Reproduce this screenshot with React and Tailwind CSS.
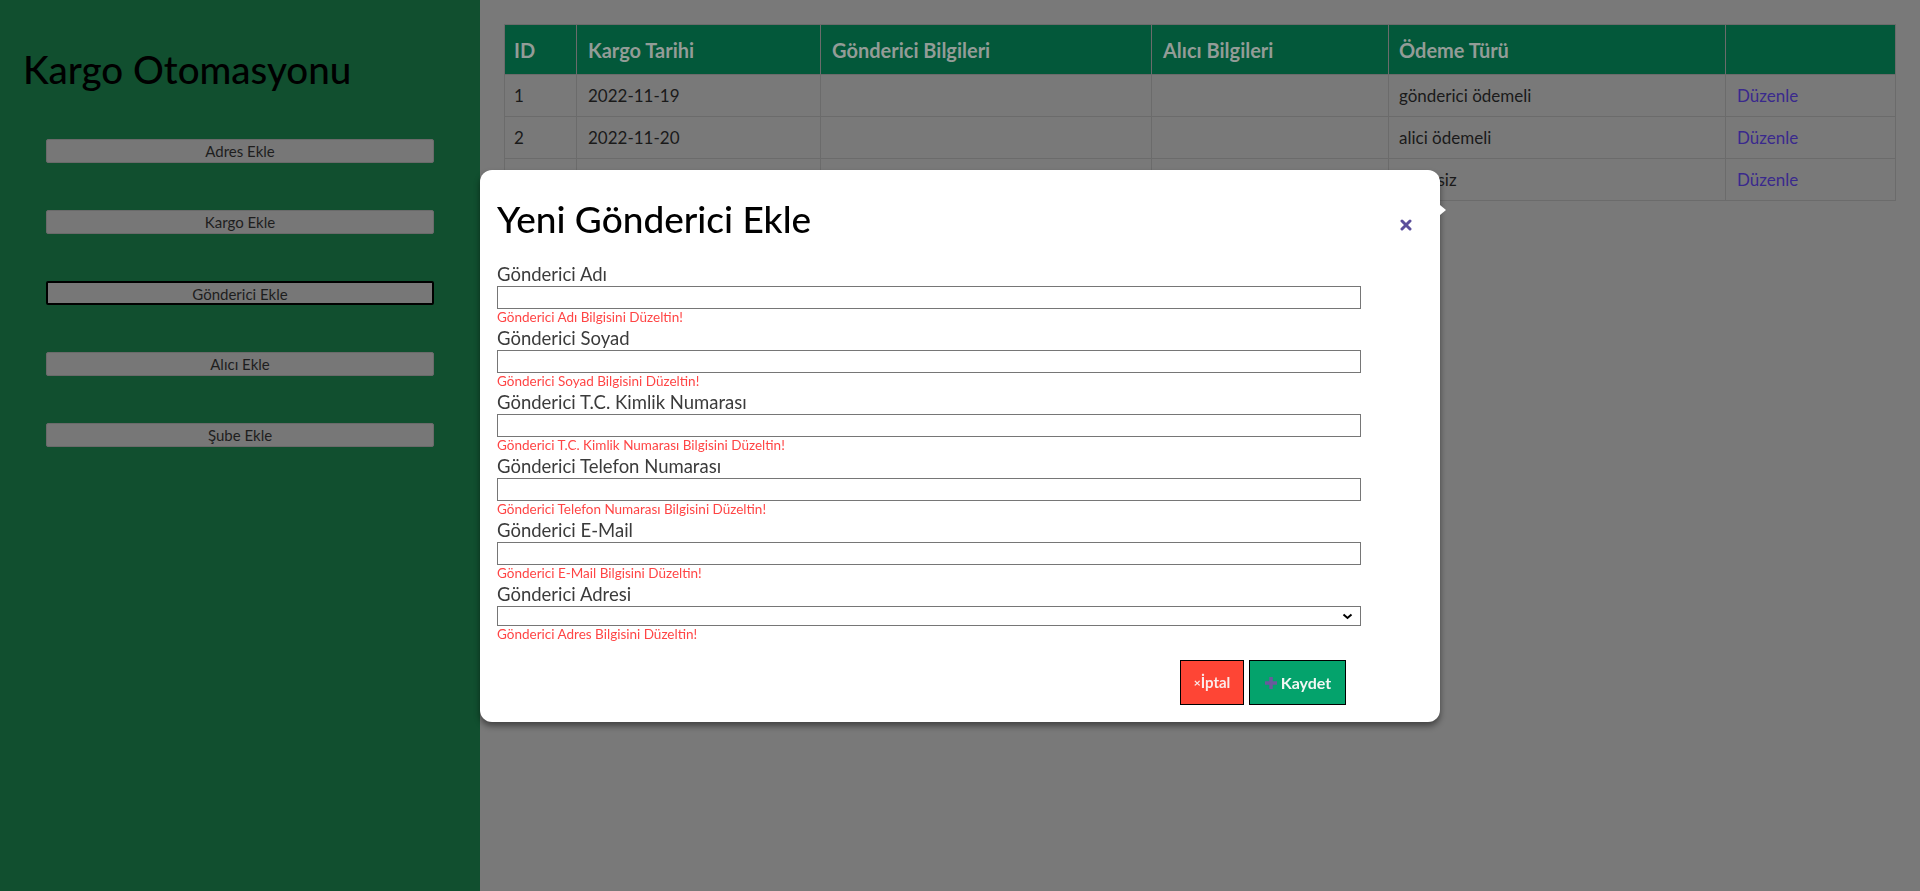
import React from 'react'

const rows = [
  { id: 1, date: '2022-11-19', odeme: 'gönderici ödemeli' },
  { id: 2, date: '2022-11-20', odeme: 'alici ödemeli' },
  { id: 3, date: '2022-11-21', odeme: 'ücretsiz' },
]

const fields = [
  { label: 'Gönderici Adı', error: 'Gönderici Adı Bilgisini Düzeltin!' },
  { label: 'Gönderici Soyad', error: 'Gönderici Soyad Bilgisini Düzeltin!' },
  { label: 'Gönderici T.C. Kimlik Numarası', error: 'Gönderici T.C. Kimlik Numarası Bilgisini Düzeltin!' },
  { label: 'Gönderici Telefon Numarası', error: 'Gönderici Telefon Numarası Bilgisini Düzeltin!' },
  { label: 'Gönderici E-Mail', error: 'Gönderici E-Mail Bilgisini Düzeltin!' },
]

const menu = ['Adres Ekle', 'Kargo Ekle', 'Gönderici Ekle', 'Alıcı Ekle', 'Şube Ekle']

const Sidebar = () => (
  <div className="w-[480px] shrink-0 min-h-screen bg-[#114f2f] pt-[47px]">
    <h1 className="pl-[23px] text-[38.5px] leading-[45px] font-medium text-black">Kargo Otomasyonu</h1>
    <div className="mt-[47px] flex flex-col gap-[47px]">
      {menu.map((m) => (
        <button
          key={m}
          className={`mx-auto w-[388px] h-[24px] rounded-[2px] bg-[#777777] text-[15px] text-[#1e1e1e] ${
            m === 'Gönderici Ekle' ? 'border-2 border-black' : 'border border-[#6a6a6a]'
          }`}
        >
          {m}
        </button>
      ))}
    </div>
  </div>
)

const KargoTable = () => (
  <div className="flex-1 p-[24px]">
    <table className="w-full border-collapse border border-[#6b6b6b] text-left">
      <thead>
        <tr className="h-[50px] bg-[#03583a] text-[20px] font-bold text-[#939c97]">
          <th className="w-[72px] px-[9px] font-bold border-x border-[#6b6b6b]">ID</th>
          <th className="w-[244px] px-[11px] font-bold border-x border-[#6b6b6b]">Kargo Tarihi</th>
          <th className="w-[331px] px-[11px] font-bold border-x border-[#6b6b6b]">Gönderici Bilgileri</th>
          <th className="w-[237px] px-[11px] font-bold border-x border-[#6b6b6b]">Alıcı Bilgileri</th>
          <th className="w-[337px] px-[10px] font-bold border-x border-[#6b6b6b]">Ödeme Türü</th>
          <th className="px-[11px] border-x border-[#6b6b6b]"></th>
        </tr>
      </thead>
      <tbody className="text-[17px] text-[#1a1a1a]">
        {rows.map((r) => (
          <tr key={r.id} className="h-[42px]">
            <td className="px-[9px] border border-[#6b6b6b]">{r.id}</td>
            <td className="px-[11px] border border-[#6b6b6b]">{r.date}</td>
            <td className="px-[11px] border border-[#6b6b6b]"></td>
            <td className="px-[11px] border border-[#6b6b6b]"></td>
            <td className="px-[10px] border border-[#6b6b6b]">{r.odeme}</td>
            <td className="px-[11px] border border-[#6b6b6b] text-[#39298d]">Düzenle</td>
          </tr>
        ))}
      </tbody>
    </table>
  </div>
)

const Modal = () => (
  <div className="fixed inset-0 flex justify-center pt-[170px]">
    <div className="relative w-[960px] h-[552px] rounded-[12px] bg-white pt-[26px] pl-[17px] shadow-[0_4px_6px_rgba(0,0,0,0.45)]">
      {/* little notch on the right edge */}
      <div className="absolute left-full top-[35px] border-y-[5px] border-y-transparent border-l-[6px] border-l-white" />

      <button className="absolute right-[28px] top-[49px] text-[#5b4f9b]">
        <svg width="12" height="12" viewBox="0 0 12 12">
          <path d="M2 2 L10 10 M10 2 L2 10" stroke="currentColor" strokeWidth="3" strokeLinecap="round" />
        </svg>
      </button>

      <h2 className="text-[37px] leading-[45px] font-medium text-black">Yeni Gönderici Ekle</h2>

      <div className="mt-[21px] w-[864px]">
        {fields.map((f) => (
          <div key={f.label}>
            <label className="block text-[18.5px] leading-[24px] text-[#3b3b3b]">{f.label}</label>
            <input type="text" className="block w-full h-[23px] border border-[#767676] outline-none" />
            <p className="text-[13.5px] leading-[17px] text-[#ff4545]">{f.error}</p>
          </div>
        ))}
        <div>
          <label className="block text-[18.5px] leading-[24px] text-[#3b3b3b]">Gönderici Adresi</label>
          <div className="relative">
            <select className="block w-full h-[20px] appearance-none border border-[#767676] bg-white outline-none" />
            <svg className="absolute right-[8px] top-[7px]" width="11" height="7" viewBox="0 0 11 7">
              <path d="M1.5 1.5 L5.5 5 L9.5 1.5" fill="none" stroke="black" strokeWidth="2" />
            </svg>
          </div>
          <p className="text-[13.5px] leading-[17px] text-[#ff4545]">Gönderici Adres Bilgisini Düzeltin!</p>
        </div>

        <div className="mt-[17px] flex justify-end gap-[5px] pr-[15px]">
          <button className="flex w-[64px] h-[45px] items-center justify-center border border-black bg-[#fe4535] text-[15px] font-bold text-[#fbeaea]">
            <span className="text-[12px]">×</span>İptal
          </button>
          <button className="flex w-[97px] h-[45px] items-center justify-center gap-[3px] border border-black bg-[#04a36c] text-[16px] font-bold text-[#f2f7f4]">
            <svg width="14" height="14" viewBox="0 0 14 14">
              <path d="M7 1 V13 M1 7 H13" stroke="#6a5a9c" strokeWidth="3.5" />
            </svg>
            Kaydet
          </button>
        </div>
      </div>
    </div>
  </div>
)

export default function App() {
  return (
    <div className="relative flex min-h-screen bg-[#797979] font-['Lato',sans-serif]">
      <Sidebar />
      <KargoTable />
      <Modal />
    </div>
  )
}
